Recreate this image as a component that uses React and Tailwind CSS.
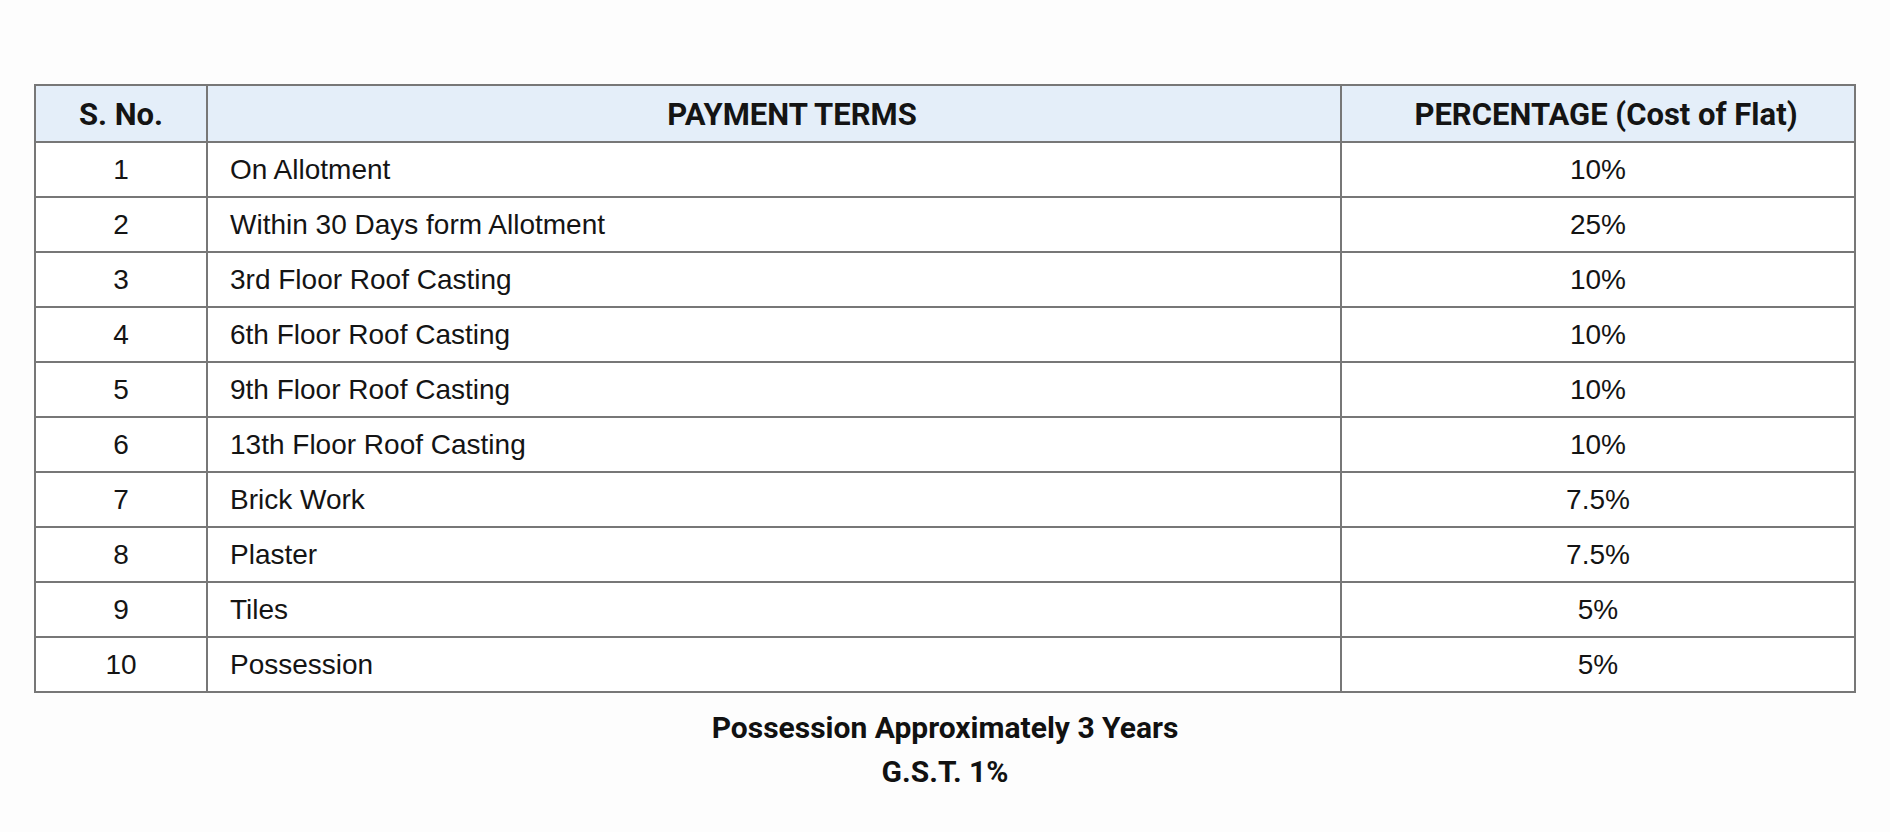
const rows = [
  { no: 1, term: 'On Allotment', pct: '10%' },
  { no: 2, term: 'Within 30 Days form Allotment', pct: '25%' },
  { no: 3, term: '3rd Floor Roof Casting', pct: '10%' },
  { no: 4, term: '6th Floor Roof Casting', pct: '10%' },
  { no: 5, term: '9th Floor Roof Casting', pct: '10%' },
  { no: 6, term: '13th Floor Roof Casting', pct: '10%' },
  { no: 7, term: 'Brick Work', pct: '7.5%' },
  { no: 8, term: 'Plaster', pct: '7.5%' },
  { no: 9, term: 'Tiles', pct: '5%' },
  { no: 10, term: 'Possession', pct: '5%' },
];

const App = () => {
  return (
    <div className="min-h-[832px] w-full bg-[#fdfdfd] px-[34px] pt-[84px] text-[#141414]">
      {/* Payment plan table */}
      <table className="w-full border-collapse border-2 border-[#777777] font-['Liberation_Sans',Arial,sans-serif] text-[28px]">
        <colgroup>
          <col className="w-[172px]" />
          <col className="w-[1134px]" />
          <col />
        </colgroup>
        <thead>
          <tr className="h-[57px] bg-[#e4eef9] font-['Roboto',sans-serif] text-[31px] font-bold">
            <th className="border-2 border-[#777777] pt-[4px] text-center font-bold">S. No.</th>
            <th className="border-2 border-[#777777] pl-[36px] pt-[4px] text-center font-bold">PAYMENT TERMS</th>
            <th className="border-2 border-[#777777] pl-[16px] pt-[4px] text-center font-bold">PERCENTAGE (Cost of Flat)</th>
          </tr>
        </thead>
        <tbody>
          {rows.map((r) => (
            <tr key={r.no} className="h-[55px] bg-white">
              <td className="border-2 border-[#777777] text-center">{r.no}</td>
              <td className="border-2 border-[#777777] pl-[22px] text-left">{r.term}</td>
              <td className="border-2 border-[#777777] text-center">{r.pct}</td>
            </tr>
          ))}
        </tbody>
      </table>

      {/* Footer notes */}
      <div className="mt-[13px] flex flex-col items-center font-['Roboto',sans-serif] text-[30px] font-bold leading-[44px] text-[#111111]">
        <p>Possession Approximately 3 Years</p>
        <p>G.S.T. 1%</p>
      </div>
    </div>
  );
};

export default App;
